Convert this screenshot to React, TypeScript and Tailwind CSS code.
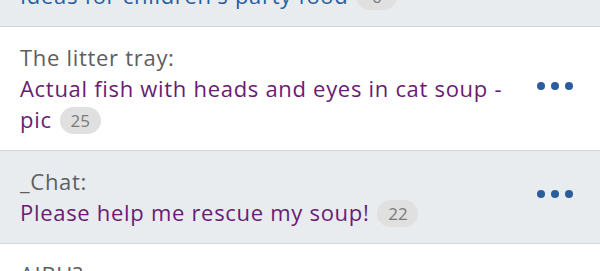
import React from 'react';

interface Thread {
  board: string;
  title: string;
  count: number;
  visited: boolean;
  shaded: boolean;
}

const threads: Thread[] = [
  { board: 'Food/recipes:', title: "Ideas for children's party food", count: 6, visited: false, shaded: true },
  { board: 'The litter tray:', title: 'Actual fish with heads and eyes in cat soup - pic', count: 25, visited: true, shaded: false },
  { board: '_Chat:', title: 'Please help me rescue my soup!', count: 22, visited: true, shaded: true },
  { board: 'AIBU?:', title: 'To think soup is a meal', count: 14, visited: false, shaded: false },
];

const Dots: React.FC = () => (
  <button className="flex w-[36px] items-center justify-between" aria-label="More options">
    <span className="h-[8px] w-[8px] rounded-full bg-[#2a5d9c]" />
    <span className="h-[8px] w-[8px] rounded-full bg-[#2a5d9c]" />
    <span className="h-[8px] w-[8px] rounded-full bg-[#2a5d9c]" />
  </button>
);

const ThreadRow: React.FC<{ thread: Thread }> = ({ thread }) => (
  <div
    className={`flex items-center border-b border-[#d6d6d6] pl-5 pr-[27px] py-[15px] ${
      thread.shaded ? 'bg-[#e9ecef]' : 'bg-white'
    }`}
  >
    <div className="w-[500px] text-[22px] leading-[31px] tracking-[0.7px]">
      <div className="text-[#5e5e5e]">{thread.board}</div>
      <div>
        <a className={thread.visited ? 'text-[#6a1b74]' : 'text-[#265ea0]'}>{thread.title}</a>
        <span className="ml-[8px] inline-block h-[27px] w-[41px] rounded-full bg-[#e0e0e0] text-center align-[1px] text-[17px] leading-[27px] tracking-normal text-[#7a7a7a]">
          {thread.count}
        </span>
      </div>
    </div>
    <div className="flex flex-1 justify-end -mt-[6px]">
      <Dots />
    </div>
  </div>
);

export default function App() {
  return (
    <div
      className="h-[271px] w-[600px] overflow-hidden bg-white"
      style={{ fontFamily: '"Open Sans", "Noto Sans", sans-serif' }}
    >
      <div className="-mt-[66px]">
        {threads.map((t) => (
          <ThreadRow key={t.board} thread={t} />
        ))}
      </div>
    </div>
  );
}
